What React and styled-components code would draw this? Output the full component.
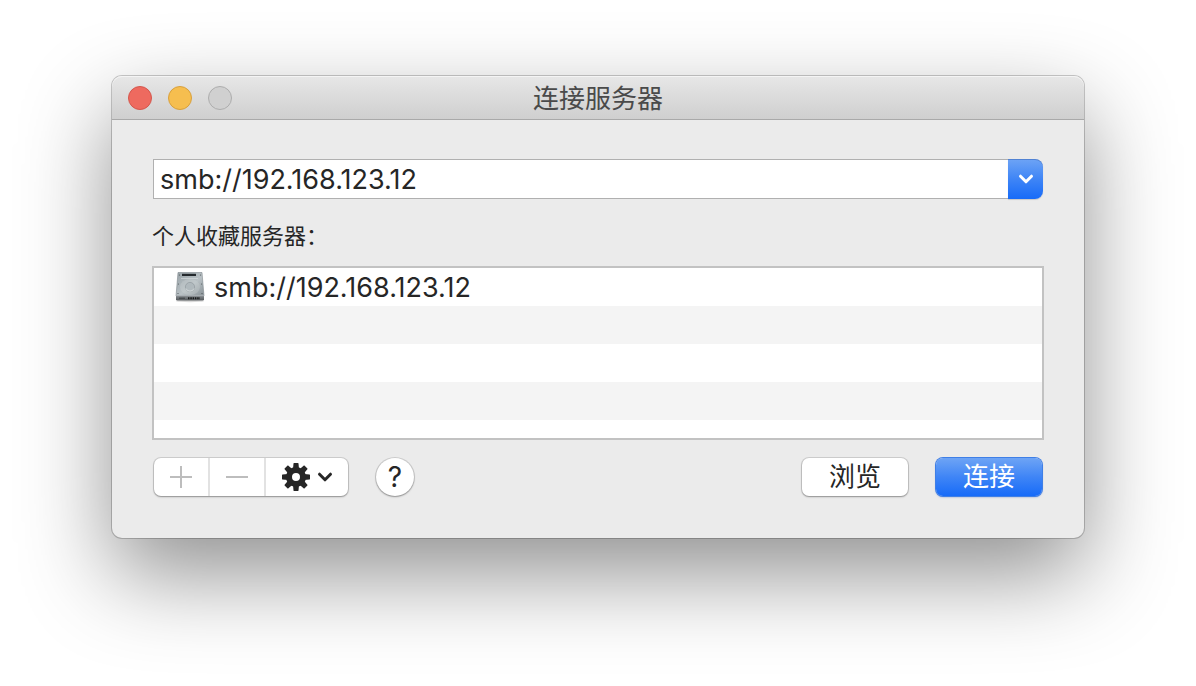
import React, { useState } from 'react'
import styled, { createGlobalStyle } from 'styled-components'

const FONT = `Inter, 'Noto Sans CJK SC', sans-serif`
const Ink = '#262626'
const Panel = '#ebebeb'
const BlueFill = 'linear-gradient(#6ea4f5, #3f85f6 50%, #176bf8)'

const ADDRESS = 'smb://192.168.123.12'
const favorites = [ADDRESS, null, null, null, null]

const DiskIcon = () => (
  <svg width="32" height="32" viewBox="0 0 32 32" aria-hidden="true">
    <defs>
      <linearGradient id="diskTop" x1="0" y1="0" x2="1" y2="1">
        <stop offset="0" stopColor="#98a2a7" />
        <stop offset="0.55" stopColor="#b9c1c5" />
        <stop offset="1" stopColor="#889196" />
      </linearGradient>
      <linearGradient id="diskFront" x1="0" y1="0" x2="0" y2="1">
        <stop offset="0" stopColor="#858b8f" />
        <stop offset="1" stopColor="#55595c" />
      </linearGradient>
    </defs>
    <ellipse cx="16" cy="30" rx="14" ry="1.2" fill="#000" opacity="0.15" />
    <path d="M4 1.500h24l2 23.500H2z" fill="url(#diskTop)" stroke="#7f888d" strokeWidth="0.6" />
    <path d="M2 24.6h28v3.6q0 1.3-1.3 1.3H3.3Q2 29.500 2 28.200z" fill="url(#diskFront)" />
    <path d="M2 24.700h28" stroke="#c3c9cc" strokeWidth="0.6" />
    <rect x="8" y="2.800" width="14" height="2.200" fill="#24292d" />
    <path d="M7 7.500h17" stroke="#dce1e3" strokeWidth="0.6" />
    <ellipse cx="16" cy="16" rx="10" ry="8" fill="#d0d6d8" opacity="0.3" />
    <circle cx="16" cy="16" r="4.600" fill="#b0b9bd" stroke="#8b9499" strokeWidth="0.600" />
    <path d="M12 17.500a4.300 4.300 0 0 0 8 0" fill="none" stroke="#dfe4e6" strokeWidth="0.800" />
    <g fill="#4b5155">
      <circle cx="5.500" cy="4" r="0.600" />
      <circle cx="26.500" cy="4" r="0.600" />
      <circle cx="4.500" cy="13" r="0.500" />
      <circle cx="27.500" cy="13" r="0.500" />
      <circle cx="4" cy="22.500" r="0.600" />
      <circle cx="28" cy="22.500" r="0.600" />
    </g>
    <path d="M5 27.200h6" stroke="#3c4043" strokeWidth="1" />
    <path d="M14 27.200h12" stroke="#17191a" strokeWidth="2" strokeDasharray="1.500 0.800" />
  </svg>
)

const GearIcon = () => (
  <svg width="28" height="28" viewBox="0 0 28 28" aria-hidden="true">
    <circle cx="14" cy="14" r="7" fill="none" stroke={Ink} strokeWidth="6" />
    {[0, 45, 90, 135, 180, 225, 270, 315].map(angle => (
      <path
        key={angle}
        d="M11.500 0.400q0-.4.4-.4h4.200q.4 0 .4.400L17 6h-6z"
        fill={Ink}
        transform={`rotate(${angle} 14 14)`}
      />
    ))}
  </svg>
)

const Chevron = ({ color }) => (
  <svg width="16" height="12" viewBox="0 0 16 12" aria-hidden="true">
    <path
      d="M2.500 3.200L8 8.800l5.500-5.600"
      fill="none"
      stroke={color}
      strokeWidth="3"
      strokeLinecap="round"
      strokeLinejoin="round"
    />
  </svg>
)

export default function App() {
  const [address, setAddress] = useState(ADDRESS)

  return (
    <Page>
      <GlobalStyle />
      <Dialog role="dialog" aria-labelledby="title">
        <TitleBar>
          <Lights>
            <Light $fill="#ee6a5f" $edge="#d4574d" aria-label="关闭" />
            <Light $fill="#f6be4f" $edge="#d8a03d" aria-label="最小化" />
            <Light $fill="#d0d0d0" $edge="#adadad" aria-label="缩放" disabled />
          </Lights>
          <Title id="title">连接服务器</Title>
        </TitleBar>
        <Body>
          <Combo>
            <Address
              aria-label="服务器地址"
              value={address}
              spellCheck={false}
              onChange={e => setAddress(e.target.value)}
            />
            <ComboButton type="button" aria-label="最近的服务器">
              <Chevron color="#fff" />
            </ComboButton>
          </Combo>
          <Caption id="favorites">个人收藏服务器：</Caption>
          <List aria-labelledby="favorites">
            {favorites.map((server, i) => (
              <Row key={i}>
                {server && <DiskIcon />}
                {server}
              </Row>
            ))}
          </List>
          <Footer>
            <Segments>
              <Segment type="button" aria-label="添加" disabled>
                <svg width="22" height="22" viewBox="0 0 22 22" aria-hidden="true">
                  <path d="M0 11h22M11 0v22" stroke="#bdbdbd" strokeWidth="2" />
                </svg>
              </Segment>
              <Segment type="button" aria-label="移除" disabled>
                <svg width="22" height="22" viewBox="0 0 22 22" aria-hidden="true">
                  <path d="M0 11h22" stroke="#bdbdbd" strokeWidth="2" />
                </svg>
              </Segment>
              <Segment type="button" aria-label="操作">
                <GearIcon />
                <Chevron color={Ink} />
              </Segment>
            </Segments>
            <Help type="button" aria-label="帮助">?</Help>
            <Actions>
              <PushButton type="button">浏览</PushButton>
              <PushButton type="button" $primary>连接</PushButton>
            </Actions>
          </Footer>
        </Body>
      </Dialog>
    </Page>
  )
}

const GlobalStyle = createGlobalStyle`
  * {
    box-sizing: border-box;
  }

  body {
    margin: 0;
    background: #fff;
    color: ${Ink};
    font-family: ${FONT};
  }

  button, input {
    margin: 0;
    padding: 0;
    border: 0;
    color: inherit;
    font-family: inherit;
  }

  svg {
    display: block;
    flex: none;
  }
`

const Page = styled.main`
  padding: 76px 112px 148px;
  overflow: hidden;
`

const Dialog = styled.section`
  border-radius: 10px;
  background: ${Panel};
  box-shadow:
    0 0 0 1px rgba(0, 0, 0, 0.2),
    0 36px 90px rgba(0, 0, 0, 0.44);
`

const TitleBar = styled.header`
  display: grid;
  grid-template-columns: 1fr auto 1fr;
  align-items: center;
  height: 44px;
  padding: 0 16px;
  border-bottom: 1px solid #a9a9a9;
  border-radius: 10px 10px 0 0;
  background: linear-gradient(#e7e7e7, #cfcfcf);
  box-shadow: inset 0 1px #f4f4f4;
`

const Lights = styled.div`
  display: flex;
  gap: 16px;
`

const Light = styled.button`
  width: 24px;
  height: 24px;
  border: 1px solid ${props => props.$edge};
  border-radius: 50%;
  background: ${props => props.$fill};
`

const Title = styled.h1`
  margin: 0;
  padding-top: 2px;
  color: #4a4a4a;
  font-size: 26px;
  font-weight: 400;
  line-height: 40px;
`

const Body = styled.div`
  padding: 39px 40px 41px;
`

const Combo = styled.div`
  display: flex;
  height: 40px;
  margin: 0 1px;
`

const Address = styled.input`
  flex: 1;
  min-width: 0;
  padding: 0 6px;
  border: 1px solid #b0b0b0;
  border-right: 0;
  background: #fff;
  font-size: 27px;
  outline: none;
`

const ComboButton = styled.button`
  display: flex;
  align-items: center;
  justify-content: center;
  width: 35px;
  border-radius: 0 8px 8px 0;
  background: ${BlueFill};
  box-shadow: inset 0 1px rgba(40, 80, 160, 0.4), 0 1px 1px rgba(0, 0, 0, 0.15);
`

const Caption = styled.h2`
  margin: 21px 0 14px;
  font-size: 22px;
  font-weight: 400;
  line-height: 32px;
`

const List = styled.ul`
  height: 174px;
  margin: 0;
  padding: 0;
  overflow: hidden;
  border: 2px solid #c2c2c2;
  background: #fff;
  list-style: none;
`

const Row = styled.li`
  display: flex;
  align-items: center;
  gap: 8px;
  height: 38px;
  padding: 0 20px;
  font-size: 27px;

  &:nth-child(even) {
    background: #f4f4f4;
  }
`

const Footer = styled.div`
  display: flex;
  align-items: center;
  margin: 17px 1px 0;
`

const raised = `
  background: #fff;
  box-shadow: 0 0 0 1px rgba(0, 0, 0, 0.12), 0 1px 2px rgba(0, 0, 0, 0.3);
`

const Segments = styled.div`
  display: grid;
  grid-template-columns: 54px 56px 84px;
  height: 38px;
  margin: 1px;
  border-radius: 7px;
  ${raised}
`

const Segment = styled.button`
  display: flex;
  align-items: center;
  justify-content: center;
  gap: 7px;
  background: none;

  & + & {
    border-left: 2px solid #e2e2e2;
  }
`

const Help = styled.button`
  width: 38px;
  height: 38px;
  margin-left: 27px;
  border-radius: 50%;
  ${raised}
  font-size: 28px;
  line-height: 38px;
`

const Actions = styled.div`
  display: flex;
  gap: 28px;
  margin: 1px 1px 1px auto;
`

const PushButton = styled.button`
  width: 106px;
  height: 38px;
  border-radius: 7px;
  font-size: 26px;
  line-height: 38px;
  ${raised}
  ${props => props.$primary && `
    background: ${BlueFill};
    box-shadow: 0 0 0 1px #3f7fe6, 0 1px 2px rgba(0, 60, 180, 0.5);
    color: #fff;
  `}
`
